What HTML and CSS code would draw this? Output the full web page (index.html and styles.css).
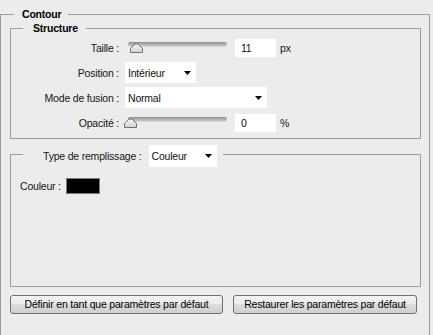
FILE: index.html
```html
<!DOCTYPE html>
<html lang="fr">
<head>
<meta charset="utf-8">
<title>Contour</title>
<link rel="stylesheet" href="styles.css">
</head>
<body>
<fieldset class="group outer">
  <legend class="legend legend-outer">Contour</legend>

  <fieldset class="group structure">
    <legend class="legend legend-sub">Structure</legend>
    <div class="form">
      <span class="lbl">Taille&nbsp;:</span>
      <div class="ctrl">
        <div class="slider">
          <div class="track"></div>
          <svg class="thumb" style="left:6px" width="13" height="10" viewBox="0 0 13 10"><defs><linearGradient id="tg1" x1="0" y1="0" x2="0" y2="1"><stop offset="0" stop-color="#f6f6f6"/><stop offset="1" stop-color="#d2d2d2"/></linearGradient></defs><polygon points="0.5,9.5 0.5,5.5 5,1 8,1 12.5,5.5 12.5,9.5" fill="url(#tg1)" stroke="#6f6f6f"/></svg>
        </div>
        <div class="field">11</div>
        <span class="unit">px</span>
      </div>

      <span class="lbl">Position&nbsp;:</span>
      <div class="ctrl">
        <div class="select sel-pos"><span>Intérieur</span><svg class="arrow" width="7" height="4" viewBox="0 0 7 4"><path d="M0 0H7L3.5 4Z" fill="#000"/></svg></div>
      </div>

      <span class="lbl">Mode de fusion&nbsp;:</span>
      <div class="ctrl">
        <div class="select sel-mode"><span>Normal</span><svg class="arrow" width="7" height="4" viewBox="0 0 7 4"><path d="M0 0H7L3.5 4Z" fill="#000"/></svg></div>
      </div>

      <span class="lbl">Opacité&nbsp;:</span>
      <div class="ctrl">
        <div class="slider">
          <div class="track"></div>
          <svg class="thumb" style="left:0px" width="13" height="10" viewBox="0 0 13 10"><defs><linearGradient id="tg2" x1="0" y1="0" x2="0" y2="1"><stop offset="0" stop-color="#f6f6f6"/><stop offset="1" stop-color="#d2d2d2"/></linearGradient></defs><polygon points="0.5,9.5 0.5,5.5 5,1 8,1 12.5,5.5 12.5,9.5" fill="url(#tg2)" stroke="#6f6f6f"/></svg>
        </div>
        <div class="field">0</div>
        <span class="unit">%</span>
      </div>
    </div>
  </fieldset>

  <div class="fill">
    <div class="fill-head">
      <span class="lbl-fill">Type de remplissage&nbsp;:</span>
      <div class="select sel-fill"><span>Couleur</span><svg class="arrow" width="7" height="4" viewBox="0 0 7 4"><path d="M0 0H7L3.5 4Z" fill="#000"/></svg></div>
    </div>
    <div class="color-row">
      <span>Couleur&nbsp;:</span>
      <div class="swatch"></div>
    </div>
  </div>

  <div class="buttons">
    <button class="btn btn-default">Définir en tant que paramètres par défaut</button>
    <button class="btn btn-restore">Restaurer les paramètres par défaut</button>
  </div>
</fieldset>
</body>
</html>
```

FILE: styles.css
```css
html, body {
  margin: 0;
  padding: 0;
  background: #ececec;
}

body {
  padding-top: 8px;
  font-family: "Liberation Sans", Arial, sans-serif;
  font-size: 10.5px;
  letter-spacing: -0.2px;
  color: #151515;
}

fieldset.group {
  border: 1px solid #9d9d9d;
  margin: 0;
  min-width: 0;
}

.legend {
  font-weight: bold;
  line-height: 13px;
  color: #000;
}

.outer {
  box-sizing: border-box;
  width: 430px;
  margin: 0 0 0 2px;
  padding: 1px 8px 21px 9px;
  border-bottom: 0;
}

.legend-outer {
  margin-left: 4px;
  padding: 0 7px 0 8px;
}

.structure {
  padding: 2px 0 5px 0;
}

.legend-sub {
  margin-left: 12px;
  padding: 0 8px 0 10px;
}

.form {
  display: grid;
  grid-template-columns: 108px 1fr;
  grid-auto-rows: 21px;
  column-gap: 6px;
  row-gap: 4px;
  align-items: center;
}

.lbl {
  text-align: right;
  white-space: nowrap;
}

.ctrl {
  display: flex;
  align-items: center;
  height: 21px;
}

.slider {
  position: relative;
  width: 103px;
  height: 12px;
  margin-left: -1px;
}

.track {
  margin-left: 4px;
  width: 99px;
  height: 4px;
  border-radius: 2px;
  background: linear-gradient(#8b8b8b 0, #a9a9a9 40%, #c6c6c6 100%);
  box-shadow: 0 1px 0 #d8d8d8;
}

.thumb {
  position: absolute;
  top: 1px;
  display: block;
}

.field {
  box-sizing: border-box;
  width: 41px;
  height: 18px;
  margin-left: 8px;
  padding-left: 6px;
  background: #fff;
  line-height: 18px;
  color: #111;
}

.unit {
  margin-left: 4px;
}

.select {
  box-sizing: border-box;
  display: flex;
  align-items: center;
  height: 21px;
  padding-left: 3px;
  background: #fff;
  color: #111;
}

.select .arrow {
  display: block;
  margin-left: auto;
  margin-right: 5px;
}

.sel-pos {
  width: 71px;
}

.sel-mode {
  width: 142px;
}

.fill {
  margin-top: 15px;
  border: 1px solid #9d9d9d;
  padding: 0 0 92px 9px;
}

.fill-head {
  display: flex;
  align-items: center;
  width: fit-content;
  height: 22px;
  margin: -10px 0 0 3px;
  padding: 0 6px 0 20px;
  background: #ececec;
}

.lbl-fill {
  white-space: nowrap;
}

.sel-fill {
  width: 68px;
  height: 22px;
  margin-left: 7px;
}

.color-row {
  display: flex;
  align-items: center;
  height: 16px;
  margin-top: 11px;
}

.swatch {
  box-sizing: border-box;
  width: 34px;
  height: 16px;
  margin-left: 5px;
  background: #000;
  border: 1px solid #7a7a7a;
}

.buttons {
  display: flex;
  gap: 10px;
  margin-top: 8px;
}

.btn {
  box-sizing: border-box;
  height: 19px;
  padding: 0;
  border: 1px solid #707070;
  border-radius: 3px;
  background: linear-gradient(#f3f3f3 0, #ebebeb 50%, #dddddd 50%, #cfcfcf 100%);
  font-family: "Liberation Sans", Arial, sans-serif;
  font-size: 10.5px;
  letter-spacing: -0.2px;
  color: #000;
  line-height: 17px;
}

.btn-default {
  width: 213px;
}

.btn-restore {
  width: 184px;
}
```
